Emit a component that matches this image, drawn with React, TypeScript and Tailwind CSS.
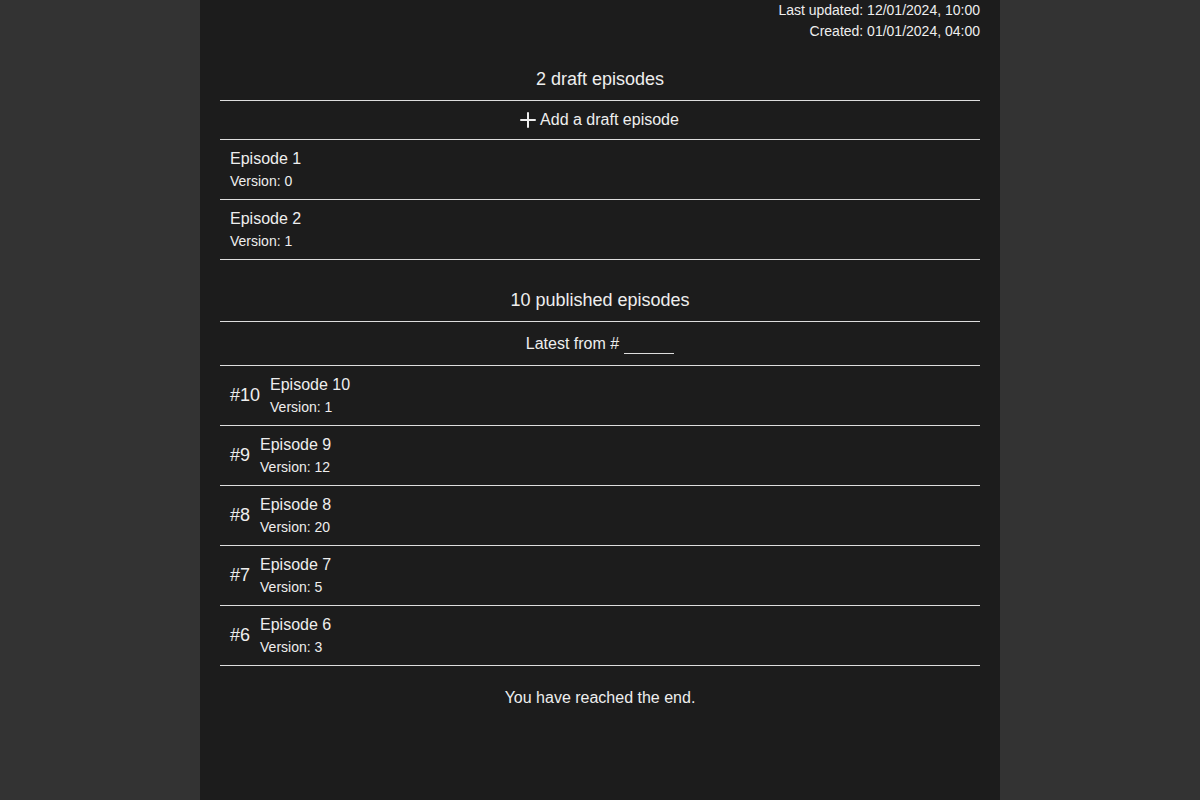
import React from 'react';
import { Plus } from 'lucide-react';

const drafts = [
  { title: 'Episode 1', version: 0 },
  { title: 'Episode 2', version: 1 },
];

const published = [
  { num: 10, title: 'Episode 10', version: 1 },
  { num: 9, title: 'Episode 9', version: 12 },
  { num: 8, title: 'Episode 8', version: 20 },
  { num: 7, title: 'Episode 7', version: 5 },
  { num: 6, title: 'Episode 6', version: 3 },
];

function EpisodeText({ title, version }: { title: string; version: number }) {
  return (
    <div className="flex flex-col">
      <span className="text-[16px] leading-[18px]">{title}</span>
      <span className="text-[14px] leading-[16px] mt-[5px]">Version: {version}</span>
    </div>
  );
}

export default function App() {
  return (
    <div className="min-h-screen bg-[#333333] flex justify-center text-[#eeeeee]" style={{ fontFamily: '"Liberation Sans", Arial, sans-serif' }}>
      <div className="w-[800px] bg-[#1c1c1c] px-[20px] min-h-screen">
        <div className="flex flex-col items-end text-[14px] leading-[21px]">
          <span>Last updated: 12/01/2024, 10:00</span>
          <span>Created: 01/01/2024, 04:00</span>
        </div>

        <h2 className="mt-[17px] py-[10px] text-[18px] leading-[21px] text-center border-b border-[#dddddd]">
          2 draft episodes
        </h2>
        <button type="button" className="w-full h-[39px] pr-[5px] flex items-center justify-center text-[16px] leading-[18px] border-b border-[#dddddd]">
          <Plus size={24} strokeWidth={2} />
          Add a draft episode
        </button>
        {drafts.map((d) => (
          <div key={d.title} className="h-[60px] px-[10px] pt-[10px] border-b border-[#dddddd]">
            <EpisodeText title={d.title} version={d.version} />
          </div>
        ))}

        <h2 className="mt-[20px] py-[10px] text-[18px] leading-[21px] text-center border-b border-[#dddddd]">
          10 published episodes
        </h2>
        <div className="h-[44px] flex items-center justify-center text-[16px] border-b border-[#dddddd]">
          <span>Latest from #</span>
          <input className="ml-[5px] w-[50px] h-[20px] bg-transparent border-b border-[#dddddd] outline-none text-[16px]" />
        </div>
        {published.map((p) => (
          <div key={p.num} className="h-[60px] px-[10px] flex items-center border-b border-[#dddddd]">
            <span className="text-[18px] leading-[21px] mr-[10px]">#{p.num}</span>
            <EpisodeText title={p.title} version={p.version} />
          </div>
        ))}

        <p className="pt-[23px] text-center text-[16px] leading-[18px]">You have reached the end.</p>
      </div>
    </div>
  );
}
